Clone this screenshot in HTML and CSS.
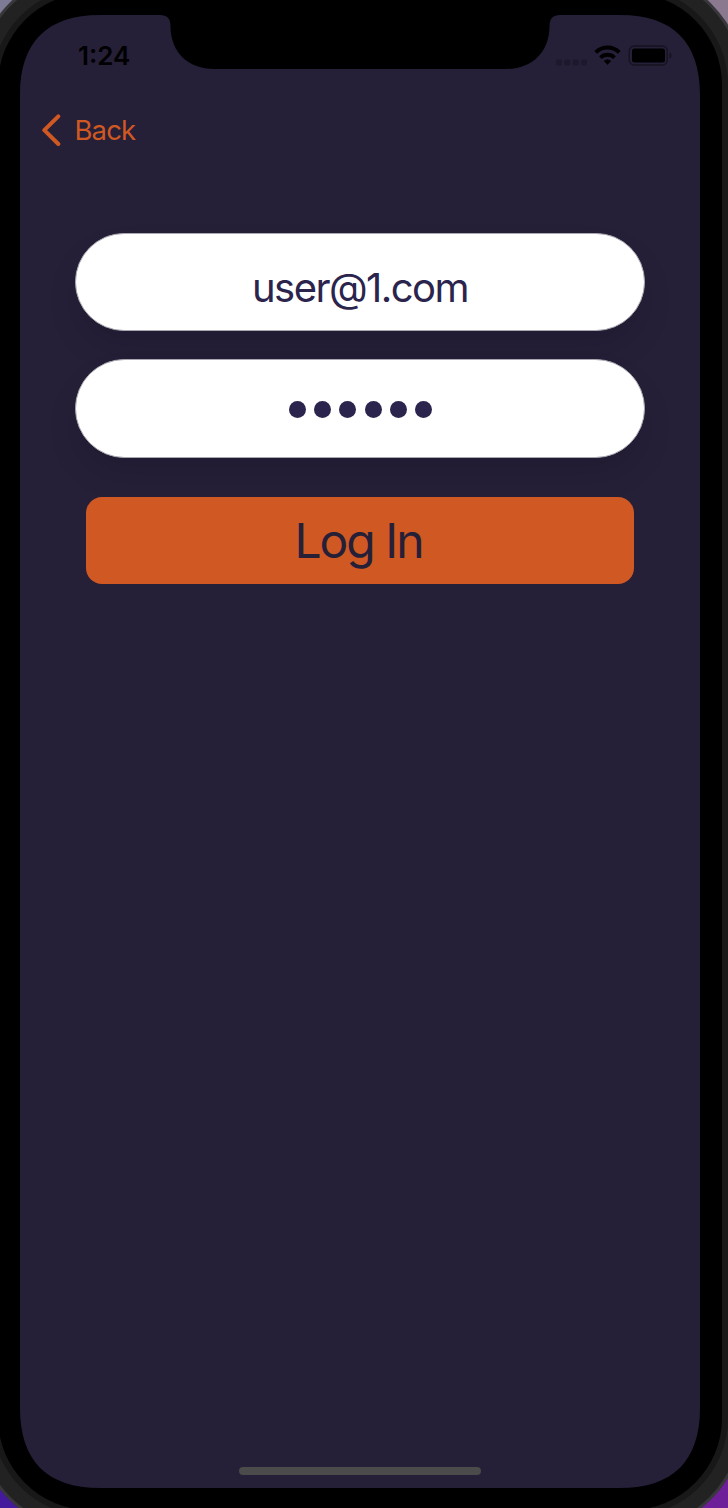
FILE: index.html
```html
<!DOCTYPE html>
<html lang="en">
<head>
<meta charset="utf-8">
<title>Log In</title>
<link rel="stylesheet" href="styles.css">
</head>
<body>
<div class="desktop">
  <svg class="device" width="728" height="1508" viewBox="0 0 728 1508" aria-hidden="true">
    <rect x="-25" y="-30" width="770" height="1563" rx="115" fill="#38373a"/>
    <rect x="-22" y="-27" width="764" height="1557" rx="112" fill="#222222"/>
    <rect x="-8" y="-13" width="736" height="1529" rx="98" fill="#181818"/>
    <rect x="-2" y="-7" width="724" height="1517" rx="92" fill="#000"/>
    <path fill="#251f38" d="M100 15H160Q170.500 15 170.500 26C170.500 53 189 69 214 69H506C531 69 549.500 53 549.500 26Q549.500 15 560 15H620C673 15 700 42 700 95V1408C700 1461 673 1488 620 1488H100C47 1488 20 1461 20 1408V95C20 42 47 15 100 15Z"/>
  </svg>
  <main class="screen">
    <header class="status">
      <span class="time">1:24</span>
      <svg class="indicators" width="118" height="24" viewBox="0 0 118 24" aria-hidden="true">
        <g fill="#1d182c"><rect x="1" y="15.500" width="6" height="6" rx="2"/><rect x="9.300" y="15.500" width="6" height="6" rx="2"/><rect x="17.700" y="15.500" width="6" height="6" rx="2"/><rect x="26" y="15.500" width="6" height="6" rx="2"/></g>
        <g fill="none" stroke="#000" stroke-width="3.900"><path d="M40.700 8.400A16.500 16.500 0 0 1 64.300 8.400"/><path d="M45.500 13.600A10 10 0 0 1 59.500 13.600"/></g>
        <path d="M49.200 17Q52.500 14.400 55.800 17L52.500 20.500Z" stroke="#000" stroke-width=".6" stroke-linejoin="round"/>
        <rect x="74.300" y="2" width="38" height="19" rx="5" fill="none" stroke="#17131f" stroke-width="1.400"/>
        <rect x="77" y="4.500" width="33" height="14" rx="2.500"/>
        <path d="M114.500 8.500Q116.500 9 116.500 11.500T114.500 14.500Z" fill="#17131f"/>
      </svg>
    </header>
    <nav class="back">
      <svg width="20" height="32" viewBox="0 0 20 32" aria-hidden="true"><path d="M17.300 2.300L3.300 16.200L17.300 30" fill="none" stroke="#cf5823" stroke-width="4" stroke-linecap="round" stroke-linejoin="round"/></svg>
      <span class="back-label">Back</span>
    </nav>
    <section class="form">
      <div class="field"><span class="email">user@1.com</span></div>
      <div class="field password"><i class="dot"></i><i class="dot"></i><i class="dot"></i><i class="dot"></i><i class="dot"></i><i class="dot"></i></div>
      <div class="login"><span class="login-label">Log In</span></div>
    </section>
    <div class="home-bar"></div>
  </main>
</div>
</body>
</html>
```
FILE: styles.css
```css
* { box-sizing: border-box; }
body { margin: 0; font-family: Inter, "Liberation Sans", sans-serif; }
.desktop {
  position: relative;
  width: 728px;
  height: 1508px;
  overflow: hidden;
  background:
    linear-gradient(90deg, #7c7a94 50%, #8b7a8f 50%) top / 100% 50% no-repeat,
    linear-gradient(90deg, #44199b 50%, #6f1e99 50%) bottom / 100% 50% no-repeat;
}
.device { position: absolute; inset: 0; }
.screen {
  position: relative;
  display: flex;
  flex-direction: column;
  width: 680px;
  height: 1488px;
  margin-left: 20px;
  padding-top: 40px;
}
.status {
  display: flex;
  justify-content: space-between;
  height: 32px;
  padding: 0 27px 0 58px;
}
.time { font-size: 26px; font-weight: 600; line-height: 32px; }
.indicators { margin-top: 4px; }
.back {
  display: flex;
  align-items: center;
  gap: 13.500px;
  height: 32px;
  margin: 42px 0 0 21px;
  color: #cf5823;
}
.back-label { font-size: 27.500px; line-height: 32px; letter-spacing: -.9px; }
.form {
  display: flex;
  flex-direction: column;
  gap: 28px;
  padding: 87px 55px 0;
}
.field {
  display: flex;
  align-items: center;
  justify-content: center;
  height: 98px;
  border: 1px solid #a9a7b0;
  border-radius: 50px;
  background: #fff;
  color: #2b244c;
  box-shadow: 0 18px 30px rgba(0, 0, 0, .1);
}
.email { font-size: 40px; line-height: 48px; padding-top: 12px; letter-spacing: -1.550px; }
.password { gap: 8.200px; height: 99px; padding: 1px 0 0 1px; }
.dot { width: 17px; height: 17px; border-radius: 50%; background: #2b244c; }
.login {
  display: flex;
  align-items: center;
  justify-content: center;
  height: 87px;
  margin: 11px 11px 0;
  border-radius: 16px;
  background: #cf5823;
  color: #251f38;
}
.login-label { font-size: 48px; line-height: 58px; padding-right: 3px; letter-spacing: -2px; }
.home-bar {
  width: 242.500px;
  height: 8.500px;
  margin: auto auto 12.900px 218.800px;
  border-radius: 5px;
  background: #4b4b4b;
}
```
